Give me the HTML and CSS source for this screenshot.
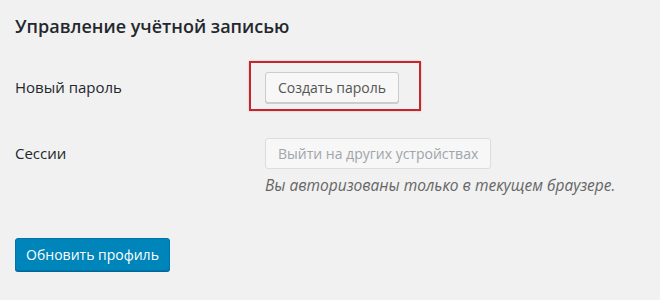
FILE: index.html
```html
<!DOCTYPE html>
<html lang="ru">
<head>
<meta charset="utf-8">
<link rel="stylesheet" href="styles.css">
</head>
<body>
<div class="page">
  <h2 class="title">Управление учётной записью</h2>
  <div class="form">
    <div class="label row1">Новый пароль</div>
    <div class="field row1">
      <span class="mark">
        <button class="btn">Создать пароль</button>
      </span>
    </div>
    <div class="label row2">Сессии</div>
    <div class="field row2">
      <button class="btn disabled">Выйти на других устройствах</button>
      <p class="desc">Вы авторизованы только в текущем браузере.</p>
    </div>
  </div>
  <button class="primary">Обновить профиль</button>
</div>
</body>
</html>
```
FILE: styles.css
```css
html, body {
  margin: 0;
  padding: 0;
  background: #f1f1f1;
}
body {
  width: 660px;
  height: 300px;
  overflow: hidden;
  font-family: "Open Sans", "Noto Sans", sans-serif;
  color: #23282d;
}
.page {
  padding: 13px 15px 0 15px;
}
.title {
  margin: 0;
  font-size: 18px;
  font-weight: 600;
  line-height: 26px;
  color: #23282d;
}
.form {
  display: grid;
  grid-template-columns: 250px 1fr;
  margin-top: 33px;
}
.label {
  font-size: 15px;
  line-height: 31px;
  color: #23282d;
}
.row2 {
  margin-top: 35px;
}
.field {
  display: flex;
  flex-direction: column;
  align-items: flex-start;
}
.mark {
  position: relative;
  display: inline-block;
}
.mark::before {
  content: "";
  position: absolute;
  left: -16px;
  top: -11px;
  right: -22px;
  bottom: -8px;
  border: 2px solid #c1272d;
  box-shadow: 0 0 2px rgba(220, 60, 60, 0.35);
}
.btn {
  font-family: inherit;
  font-size: 14px;
  height: 31px;
  padding: 0 12px;
  background: #f7f7f7;
  border: 1px solid #cccccc;
  border-radius: 3px;
  color: #555555;
  box-shadow: 0 1px 0 #cccccc;
  cursor: pointer;
}
.btn.disabled {
  color: #a0a5aa;
  border-color: #dddddd;
  box-shadow: none;
}
.desc {
  margin: 6px 0 0 0;
  font-size: 15.5px;
  font-style: italic;
  color: #666666;
  line-height: 20px;
}
.primary {
  margin-top: 43px;
  font-family: inherit;
  font-size: 14px;
  height: 33px;
  width: 155px;
  padding: 0 10px;
  background: #0085ba;
  border: 1px solid #0073aa;
  border-radius: 3px;
  color: #ffffff;
  box-shadow: 0 1px 0 #006799;
  cursor: pointer;
}
```
